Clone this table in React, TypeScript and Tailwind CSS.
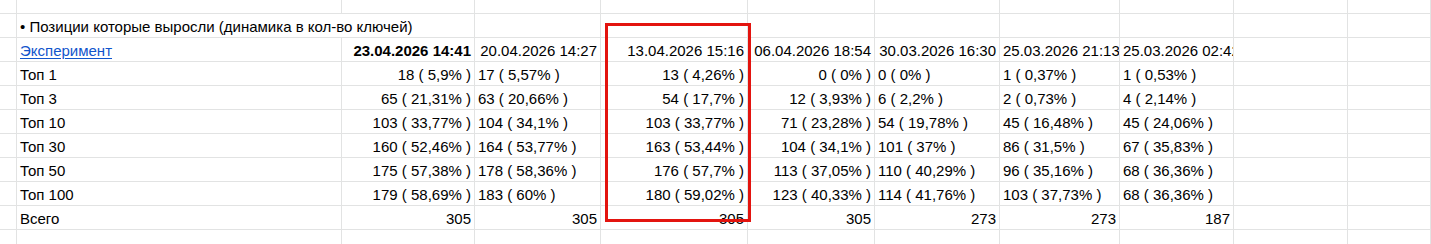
import * as React from "react";

type Align = "l" | "r";

const header = [
  "23.04.2026 14:41",
  "20.04.2026 14:27",
  "13.04.2026 15:16",
  "06.04.2026 18:54",
  "30.03.2026 16:30",
  "25.03.2026 21:13",
  "25.03.2026 02:42",
];
const headerAlign: Align[] = ["r", "r", "r", "r", "r", "l", "l"];
const valueAlign: Align[] = ["r", "l", "r", "r", "l", "l", "l"];

const rows: [string, string[]][] = [
  ["Топ 1", ["18 ( 5,9% )", "17 ( 5,57% )", "13 ( 4,26% )", "0 ( 0% )", "0 ( 0% )", "1 ( 0,37% )", "1 ( 0,53% )"]],
  ["Топ 3", ["65 ( 21,31% )", "63 ( 20,66% )", "54 ( 17,7% )", "12 ( 3,93% )", "6 ( 2,2% )", "2 ( 0,73% )", "4 ( 2,14% )"]],
  ["Топ 10", ["103 ( 33,77% )", "104 ( 34,1% )", "103 ( 33,77% )", "71 ( 23,28% )", "54 ( 19,78% )", "45 ( 16,48% )", "45 ( 24,06% )"]],
  ["Топ 30", ["160 ( 52,46% )", "164 ( 53,77% )", "163 ( 53,44% )", "104 ( 34,1% )", "101 ( 37% )", "86 ( 31,5% )", "67 ( 35,83% )"]],
  ["Топ 50", ["175 ( 57,38% )", "178 ( 58,36% )", "176 ( 57,7% )", "113 ( 37,05% )", "110 ( 40,29% )", "96 ( 35,16% )", "68 ( 36,36% )"]],
  ["Топ 100", ["179 ( 58,69% )", "183 ( 60% )", "180 ( 59,02% )", "123 ( 40,33% )", "114 ( 41,76% )", "103 ( 37,73% )", "68 ( 36,36% )"]],
];
const totals = ["305", "305", "305", "305", "273", "273", "187"];

function Cell({
  children,
  align = "l",
  className = "",
}: {
  children?: React.ReactNode;
  align?: Align;
  className?: string;
}) {
  return (
    <div
      className={`flex items-end overflow-hidden whitespace-nowrap border-r border-b border-[#e2e3e3] px-[3px] pb-[2px] leading-[17px] ${
        align === "r" ? "justify-end" : "justify-start"
      } ${className}`}
    >
      {children}
    </div>
  );
}

function Blank({ n }: { n: number }) {
  return (
    <>
      {Array.from({ length: n }).map((_, i) => (
        <Cell key={i} />
      ))}
    </>
  );
}

export default function App() {
  return (
    <div className="relative h-[244px] w-[1431px] overflow-hidden bg-white font-['Liberation_Sans',Arial,sans-serif] text-[15px] text-black">
      <div className="grid grid-cols-[17px_325px_133px_126px_147px_127px_125px_120px_114px_114px_1fr] grid-rows-[14px_repeat(10,24px)]">
        <Blank n={11} />

        {/* title row */}
        <Cell />
        <Cell className="col-span-2">• Позиции которые выросли (динамика в кол-во ключей)</Cell>
        <Blank n={8} />

        {/* header row */}
        <Cell />
        <Cell>
          <a href="#" className="text-[#1155cc] underline underline-offset-[2px]">
            Эксперимент
          </a>
        </Cell>
        {header.map((h, i) => (
          <Cell key={h} align={headerAlign[i]} className={i === 0 ? "font-bold" : ""}>
            {h}
          </Cell>
        ))}
        <Blank n={2} />

        {rows.map(([label, vals]) => (
          <React.Fragment key={label}>
            <Cell />
            <Cell>{label}</Cell>
            {vals.map((v, i) => (
              <Cell key={i} align={valueAlign[i]}>
                {v}
              </Cell>
            ))}
            <Blank n={2} />
          </React.Fragment>
        ))}

        <Cell />
        <Cell>Всего</Cell>
        {totals.map((t, i) => (
          <Cell key={i} align="r">
            {t}
          </Cell>
        ))}
        <Blank n={2} />

        <Blank n={11} />
      </div>

      {/* red annotation frame */}
      <div className="pointer-events-none absolute left-[605px] top-[23px] h-[199px] w-[146px] border-[3px] border-[#e3140f]" />
    </div>
  );
}
